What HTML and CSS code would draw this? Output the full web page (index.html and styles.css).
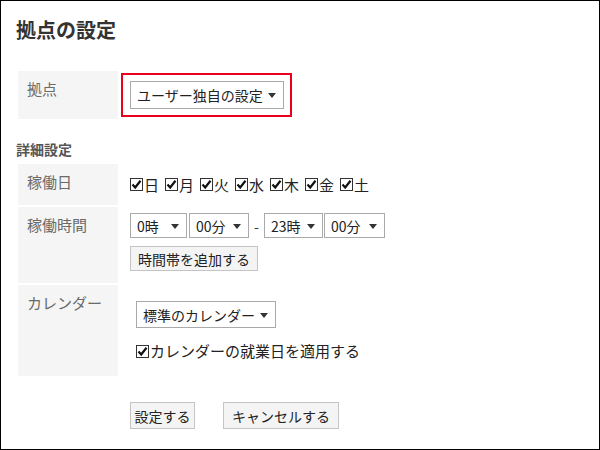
FILE: index.html
```html
<!DOCTYPE html>
<html lang="ja">
<head>
<meta charset="utf-8">
<title>拠点の設定</title>
<link rel="stylesheet" href="styles.css">
</head>
<body>
<div class="frame">
  <h1 class="title">拠点の設定</h1>

  <div class="form">
    <div class="label row-base">拠点</div>
    <div class="value row-base">
      <div class="highlight">
        <div class="select sel-base"><span>ユーザー独自の設定</span><i class="arrow"></i></div>
      </div>
    </div>
  </div>

  <h2 class="section">詳細設定</h2>

  <div class="form">
    <div class="label row-days">稼働日</div>
    <div class="value row-days days">
      <label class="cb"><svg class="box" viewBox="0 0 13 13"><rect x="0.5" y="0.5" width="12" height="12" fill="#fff" stroke="#333"/><path d="M2.5 6.5 L5.2 9.5 L10.5 2.8" fill="none" stroke="#111" stroke-width="2.2"/></svg>日</label>
      <label class="cb"><svg class="box" viewBox="0 0 13 13"><rect x="0.5" y="0.5" width="12" height="12" fill="#fff" stroke="#333"/><path d="M2.5 6.5 L5.2 9.5 L10.5 2.8" fill="none" stroke="#111" stroke-width="2.2"/></svg>月</label>
      <label class="cb"><svg class="box" viewBox="0 0 13 13"><rect x="0.5" y="0.5" width="12" height="12" fill="#fff" stroke="#333"/><path d="M2.5 6.5 L5.2 9.5 L10.5 2.8" fill="none" stroke="#111" stroke-width="2.2"/></svg>火</label>
      <label class="cb"><svg class="box" viewBox="0 0 13 13"><rect x="0.5" y="0.5" width="12" height="12" fill="#fff" stroke="#333"/><path d="M2.5 6.5 L5.2 9.5 L10.5 2.8" fill="none" stroke="#111" stroke-width="2.2"/></svg>水</label>
      <label class="cb"><svg class="box" viewBox="0 0 13 13"><rect x="0.5" y="0.5" width="12" height="12" fill="#fff" stroke="#333"/><path d="M2.5 6.5 L5.2 9.5 L10.5 2.8" fill="none" stroke="#111" stroke-width="2.2"/></svg>木</label>
      <label class="cb"><svg class="box" viewBox="0 0 13 13"><rect x="0.5" y="0.5" width="12" height="12" fill="#fff" stroke="#333"/><path d="M2.5 6.5 L5.2 9.5 L10.5 2.8" fill="none" stroke="#111" stroke-width="2.2"/></svg>金</label>
      <label class="cb"><svg class="box" viewBox="0 0 13 13"><rect x="0.5" y="0.5" width="12" height="12" fill="#fff" stroke="#333"/><path d="M2.5 6.5 L5.2 9.5 L10.5 2.8" fill="none" stroke="#111" stroke-width="2.2"/></svg>土</label>
    </div>

    <div class="label row-time">稼働時間</div>
    <div class="value row-time">
      <div class="time-line">
        <div class="select sel-time w57"><span>0時</span><i class="arrow"></i></div>
        <div class="select sel-time w60"><span>00分</span><i class="arrow"></i></div>
        <span class="dash">-</span>
        <div class="select sel-time w59"><span>23時</span><i class="arrow"></i></div>
        <div class="select sel-time w61"><span>00分</span><i class="arrow"></i></div>
      </div>
      <button class="btn add">時間帯を追加する</button>
    </div>

    <div class="label row-cal">カレンダー</div>
    <div class="value row-cal cal">
      <div class="select sel-cal"><span>標準のカレンダー</span><i class="arrow"></i></div>
      <label class="cb cal-cb"><svg class="box" viewBox="0 0 13 13"><rect x="0.5" y="0.5" width="12" height="12" fill="#fff" stroke="#333"/><path d="M2.5 6.5 L5.2 9.5 L10.5 2.8" fill="none" stroke="#111" stroke-width="2.2"/></svg>カレンダーの就業日を適用する</label>
    </div>
  </div>

  <div class="actions">
    <button class="btn submit">設定する</button>
    <button class="btn cancel">キャンセルする</button>
  </div>
</div>
</body>
</html>
```

FILE: styles.css
```css
* { box-sizing: border-box; }

html, body {
  margin: 0;
  padding: 0;
  background: #fff;
}

body {
  font-family: "Noto Sans CJK JP", "Noto Sans", sans-serif;
  color: #222;
}

.frame {
  width: 600px;
  height: 450px;
  border: 1px solid #000;
  padding: 15px 0 0 15px;
}

.title {
  margin: 0;
  font-size: 20px;
  line-height: 28px;
  font-weight: bold;
  color: #333;
}

.form {
  display: grid;
  grid-template-columns: 100px 1fr;
  column-gap: 3px;
  row-gap: 2px;
  margin-left: 2px;
}

.form:first-of-type {
  margin-top: 27px;
}

.label {
  background: #f5f5f5;
  color: #6a6a6a;
  font-size: 15px;
  line-height: 20px;
  padding: 8px 0 0 9px;
  font-weight: 400;
}

.value {
  padding-left: 9px;
  font-size: 15px;
  line-height: 20px;
}

.row-base { height: 48px; }

.row-base.value { padding: 2px 0 0 0; }

.highlight {
  display: inline-block;
  border: 2px solid #e8001c;
  padding: 6px 6px 6px 7px;
}

.select {
  display: flex;
  align-items: center;
  justify-content: space-between;
  border: 1px solid #aaa;
  background: #fff;
  color: #222;
  font-size: 14px;
  padding: 0 7px 0 6px;
  white-space: nowrap;
}

.arrow {
  display: block;
  width: 0;
  height: 0;
  border-left: 4px solid transparent;
  border-right: 4px solid transparent;
  border-top: 5px solid #333;
  margin-top: 1px;
}

.sel-base { width: 154px; height: 28px; }

.section {
  margin: 20px 0 5px 0;
  font-size: 14px;
  line-height: 20px;
  font-weight: bold;
  color: #555;
}

.row-days { height: 41px; }

.days {
  display: flex;
  align-items: center;
  padding-top: 0;
}

.cb {
  display: inline-flex;
  align-items: center;
  color: #222;
  white-space: nowrap;
}

.days .cb { margin-right: 6px; }

.box {
  width: 13px;
  height: 13px;
  margin-right: 1px;
  flex: none;
}

.row-time { height: 76px; }

.row-time.value { padding-top: 6px; }

.time-line {
  display: flex;
  align-items: center;
  height: 25px;
}

.sel-time {
  height: 25px;
  padding: 0 7px 0 6px;
}

.w57 { width: 57px; margin-right: 2px; }
.w60 { width: 60px; }
.w59 { width: 59px; margin-right: 1px; }
.w61 { width: 61px; }

.dash {
  width: 15px;
  text-align: center;
  font-size: 14px;
  color: #333;
}

.btn {
  display: block;
  font-family: inherit;
  font-size: 14px;
  color: #222;
  background: #f4f4f4;
  border: 1px solid #c4c4c4;
  border-radius: 0;
  height: 25px;
  padding: 0;
  line-height: 22px;
  margin: 0;
  white-space: nowrap;
  text-align: center;
}

.add { margin-top: 8px; width: 128px; }

.row-cal { height: 91px; }

.cal { padding: 16px 0 0 15px; }

.sel-cal { width: 140px; height: 27px; }

.cal-cb { margin-top: 13px; }

.actions {
  display: flex;
  gap: 28px;
  margin: 26px 0 0 114px;
}

.btn.submit { width: 65px; height: 27px; }
.btn.cancel { width: 116px; height: 27px; }
```
